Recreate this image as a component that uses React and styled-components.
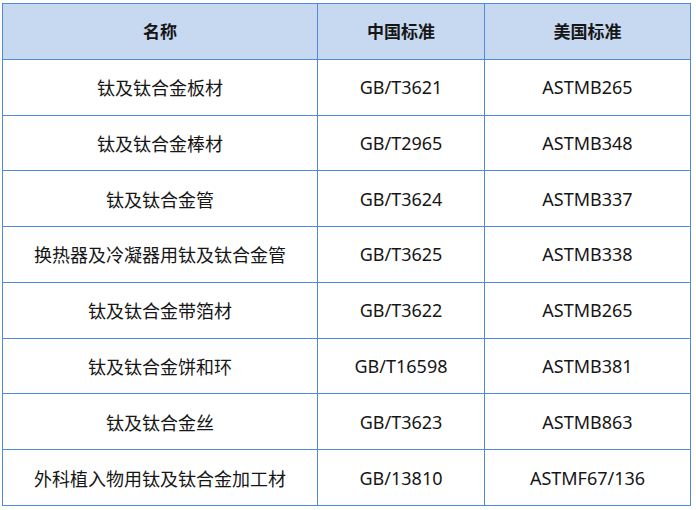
import React from 'react';
import styled, { createGlobalStyle } from 'styled-components';

const GlobalStyle = createGlobalStyle`
  html, body {
    margin: 0;
    padding: 0;
    background: #ffffff;
  }
  body {
    font-family: "Noto Sans", "Noto Sans CJK SC", sans-serif;
    color: #1a1a1a;
  }
`;

const Page = styled.div`
  padding: 3px 0 0 2px;
`;

const Table = styled.div`
  display: grid;
  grid-template-columns: 315px 167px 206px;
  grid-template-rows: repeat(9, 1fr);
  width: 689px;
  height: 503px;
  box-sizing: border-box;
  border-top: 1px solid #4f8bd8;
  border-left: 1px solid #4f8bd8;
`;

const Cell = styled.div`
  display: flex;
  align-items: center;
  justify-content: center;
  padding-bottom: ${(p) => (p.$head ? '2px' : '0')};
  border-right: 1px solid #4f8bd8;
  border-bottom: 1px solid #4f8bd8;
  background: ${(p) => (p.$head ? '#c6d9f1' : '#ffffff')};
  font-weight: ${(p) => (p.$head ? 700 : 400)};
  font-size: ${(p) => (p.$head ? '17px' : '18px')};
  color: #161616;
  white-space: nowrap;
`;

const rows = [
  ['钛及钛合金板材', 'GB/T3621', 'ASTMB265'],
  ['钛及钛合金棒材', 'GB/T2965', 'ASTMB348'],
  ['钛及钛合金管', 'GB/T3624', 'ASTMB337'],
  ['换热器及冷凝器用钛及钛合金管', 'GB/T3625', 'ASTMB338'],
  ['钛及钛合金带箔材', 'GB/T3622', 'ASTMB265'],
  ['钛及钛合金饼和环', 'GB/T16598', 'ASTMB381'],
  ['钛及钛合金丝', 'GB/T3623', 'ASTMB863'],
  ['外科植入物用钛及钛合金加工材', 'GB/13810', 'ASTMF67/136'],
];

export default function App() {
  return (
    <Page>
      <GlobalStyle />
      <Table>
        <Cell $head>名称</Cell>
        <Cell $head>中国标准</Cell>
        <Cell $head>美国标准</Cell>
        {rows.map((r) =>
          r.map((c, i) => <Cell key={r[0] + i}>{c}</Cell>)
        )}
      </Table>
    </Page>
  );
}
